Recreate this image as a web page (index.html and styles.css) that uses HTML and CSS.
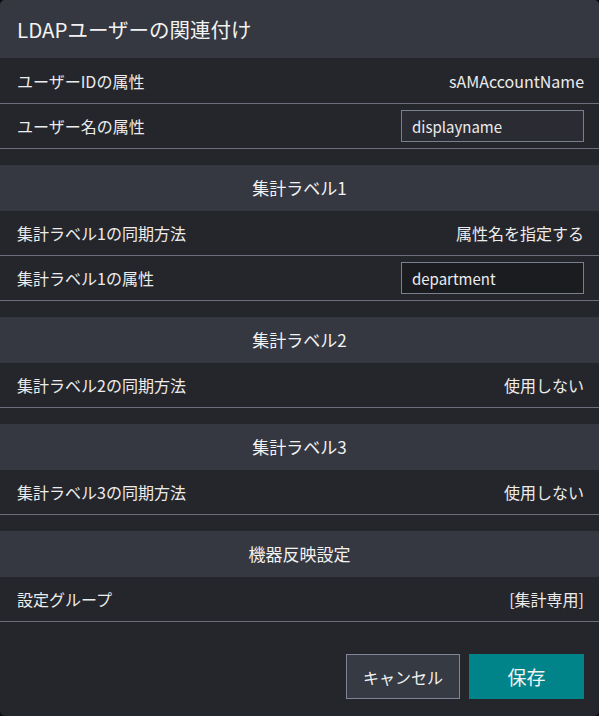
FILE: index.html
```html
<!DOCTYPE html>
<html lang="ja">
<head>
<meta charset="utf-8">
<link rel="stylesheet" href="styles.css">
</head>
<body>
<div class="dialog">
  <div class="title">LDAPユーザーの関連付け</div>
  <div class="group">
    <div class="row"><span class="label">ユーザーIDの属性</span><span class="value">sAMAccountName</span></div>
    <div class="row"><span class="label">ユーザー名の属性</span><input class="field" type="text" value="displayname"></div>
  </div>
  <div class="group">
    <div class="section">集計ラベル1</div>
    <div class="row"><span class="label">集計ラベル1の同期方法</span><span class="value">属性名を指定する</span></div>
    <div class="row"><span class="label">集計ラベル1の属性</span><input class="field dark" type="text" value="department"></div>
  </div>
  <div class="group">
    <div class="section">集計ラベル2</div>
    <div class="row"><span class="label">集計ラベル2の同期方法</span><span class="value">使用しない</span></div>
  </div>
  <div class="group">
    <div class="section">集計ラベル3</div>
    <div class="row"><span class="label">集計ラベル3の同期方法</span><span class="value">使用しない</span></div>
  </div>
  <div class="group">
    <div class="section">機器反映設定</div>
    <div class="row"><span class="label">設定グループ</span><span class="value">[集計専用]</span></div>
  </div>
  <div class="actions">
    <button class="btn cancel" type="button">キャンセル</button>
    <button class="btn save" type="button">保存</button>
  </div>
</div>
</body>
</html>
```
FILE: styles.css
```css
html, body {
  margin: 0;
  padding: 0;
  background: #0c0c0e;
}
body {
  font-family: "Noto Sans CJK JP", "Noto Sans", sans-serif;
  color: #ececec;
}
.dialog {
  width: 599px;
  height: 716px;
  background: #25262b;
  border-radius: 5px;
  overflow: hidden;
  display: flex;
  flex-direction: column;
}
.title {
  height: 58px;
  background: #353841;
  font-size: 20.5px;
  line-height: 58px;
  padding-left: 17px;
  color: #f2f2f2;
}
.group + .group {
  margin-top: 16px;
}
.section {
  height: 46px;
  background: #353841;
  font-size: 17px;
  line-height: 46px;
  text-align: center;
  color: #f2f2f2;
}
.row {
  height: 44px;
  border-bottom: 1px solid #6c6f7b;
  display: flex;
  align-items: center;
  justify-content: space-between;
  padding: 0 15px 0 17px;
  font-size: 16px;
}
.row:first-child {
  height: 45px;
}
.value {
  font-size: 16px;
}
.field {
  box-sizing: border-box;
  width: 183px;
  height: 32px;
  border: 1px solid #7a7f8e;
  background: #2b2c33;
  color: #ececec;
  font-family: "Noto Sans CJK JP", "Noto Sans", sans-serif;
  font-size: 15px;
  padding: 0 10px;
  outline: none;
}
.field.dark {
  background: #1b1c20;
}
.actions {
  display: flex;
  justify-content: flex-end;
  gap: 9px;
  padding: 32px 15px 0 0;
}
.btn {
  height: 45px;
  font-family: "Noto Sans CJK JP", "Noto Sans", sans-serif;
  color: #f2f2f2;
  cursor: pointer;
}
.cancel {
  width: 114px;
  background: #363a43;
  border: 1px solid #7f8597;
  font-size: 16px;
}
.save {
  width: 115px;
  background: #00848a;
  border: none;
  font-size: 19px;
}
```
